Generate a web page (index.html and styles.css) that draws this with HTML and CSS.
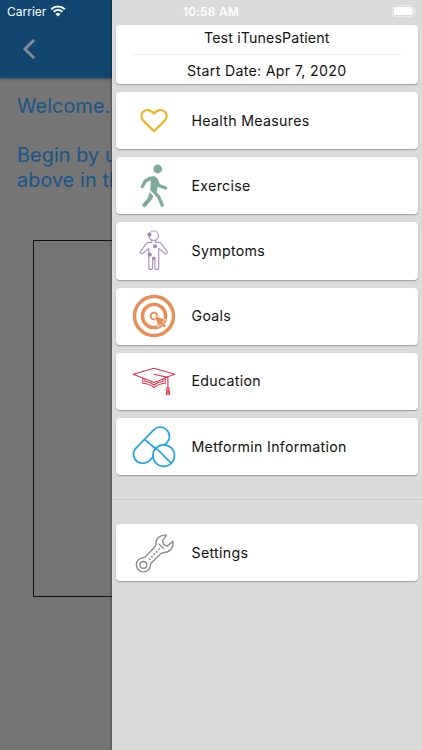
FILE: index.html
```
<!DOCTYPE html>
<html lang="en">
<head>
  <meta charset="UTF-8" />
  <title>Menu</title>
  <meta name="viewport" content="width=device-width, initial-scale=1.0" />
  <link rel="stylesheet" href="styles.css">
</head>
<body>

  <!-- Page behind the drawer -->
  <div class="page">
    <header class="topbar">
      <svg class="back" width="14" height="22" viewBox="0 0 14 22"><path d="M12 2 3 11l9 9"/></svg>
    </header>
    <main class="welcome">
      <p>Welcome.</p>
      <p>Begin by u<br>above in th</p>
      <div class="frame"></div>
    </main>
  </div>

  <!-- Side menu -->
  <nav class="drawer">
    <div class="card patient">
      <div class="name">Test iTunesPatient</div>
      <div class="date">Start Date: Apr 7, 2020</div>
    </div>

    <a class="card item">
      <svg class="icon heart" viewBox="0 0 44 44"><path d="M22 32.3 12.2 22.6C9.2 19.6 8.5 15.8 10.6 13.2 13.4 9.8 18.9 10.4 22 14.6 25.1 10.4 30.6 9.8 33.4 13.2 35.5 15.8 34.8 19.6 31.8 22.6Z"/></svg>
      <span>Health Measures</span>
    </a>

    <a class="card item">
      <svg class="icon walk" viewBox="0 0 44 44">
        <circle cx="25.7" cy="5" r="4.4"/>
        <path class="body" d="M16.5 13.5 22.5 12.6 25.8 15.5 24.8 25.5 24 29.5 18.8 26.5 19.2 17Z"/>
        <path class="limb" d="M18.5 14.3 13.3 17 10.3 22.6M24 16 26.8 21.6 33.6 24M21 26.5 26.7 32.8 30.2 41.2"/>
        <path class="body" d="M17.9 29.2 20.8 32 19.3 35.6 13.4 42.4C12 43.6 9.9 42 11 40.3L16.3 34.2Z"/>
      </svg>
      <span>Exercise</span>
    </a>

    <a class="card item">
      <svg class="icon symptoms" viewBox="0 0 44 44">
        <circle cx="21.7" cy="6.7" r="4.7"/>
        <path d="M19.8 11.3v2.1h-2.7c-1.2 0-2 .5-2.8 1.3L8.6 22.2c-1.3 1.7.8 3.4 2.4 2l5.8-4.7v19c0 2.7 3.8 2.7 3.8 0V28.4h2.3v10.1c0 2.7 3.8 2.7 3.8 0v-19l5.8 4.7c1.6 1.4 3.7-.3 2.4-2l-5.7-7.5c-.8-.8-1.6-1.3-2.8-1.3h-2.7v-2.1"/>
        <g class="dots"><circle cx="17.4" cy="5.7" r="2.1"/><circle cx="23" cy="17.3" r="2"/><circle cx="17.7" cy="25.7" r="2.1"/><circle cx="21.7" cy="29.7" r="1.4"/></g>
      </svg>
      <span>Symptoms</span>
    </a>

    <a class="card item">
      <svg class="icon goals" viewBox="0 0 44 44">
        <circle cx="22" cy="22" r="19.5"/>
        <circle cx="22" cy="22" r="11.6"/>
        <circle class="inner" cx="22" cy="22" r="3.4"/>
        <path d="M22.6 21.6 33.9 25.6 30.5 27.9 34.3 31.8 32.1 34 28.3 30.1 26.3 33Z"/>
      </svg>
      <span>Goals</span>
    </a>

    <a class="card item">
      <svg class="icon education" viewBox="0 0 44 44">
        <path d="M1.2 15.3 22 9.2 42.8 15.3 34 18.6M33 19.2 22 23.4 1.2 15.3M22 15.3 35.9 18.4v10.3M10.8 19.4v4.8C15.5 24.6 19.3 26.1 22 28.6 24.7 26.1 28.5 24.6 33.2 24.2V19.2M13 20.3v2.2C17 22.8 19.7 24 22 26 24.3 24 27 22.8 31 22.5V20.3"/>
        <circle cx="35.9" cy="29.9" r="1.3"/>
        <path d="M35 31.2 34.2 35.3h3.5l-.8-4.1M36 32v3"/>
      </svg>
      <span>Education</span>
    </a>

    <a class="card item">
      <svg class="icon pills" viewBox="0 0 44 44">
        <path d="M20.8 32C16.8 37.8 10.8 40 5.3 36.7 .8 33.3 .2 27.2 4 23.2L21.7 4.8C25.3 1.2 31 1.2 34.7 4.8 38.3 8.5 38.3 14 35 17.7L32.8 19.8M12.8 14.6 24 24"/>
        <circle cx="31.7" cy="30.6" r="10.8"/>
        <path d="M24 23 39.2 38.2"/>
      </svg>
      <span>Metformin Information</span>
    </a>

    <hr>

    <a class="card item">
      <svg class="icon settings" viewBox="0 0 44 44">
        <path d="M34.6 4.2C28.5 3.4 23.6 7.6 24 13.3 24 14.5 23.5 15.2 22.7 16L13.4 25.8C12.5 26.7 11.8 26.8 10.7 26.9 6.8 27.2 4.2 30.2 4.3 33.8 4.4 38 7.7 41 11.6 40.9 15.7 40.8 18.6 37.5 18.5 33.8 18.5 32.8 18.8 32.2 19.6 31.5L29.2 22.6C30.1 21.8 31 21.6 32.2 21.5 38 21 42 16.2 41 10.4L35.2 15.1 31.5 13.6 30.5 9.6Z"/>
        <circle cx="11.4" cy="33.9" r="3.4"/>
        <path class="dash" d="M17.6 28.2 27.4 18"/>
        <path d="M27.2 13.2 31.3 17.2"/>
      </svg>
      <span>Settings</span>
    </a>
  </nav>

  <!-- Status bar -->
  <div class="status">
    <div class="carrier">
      <span>Carrier</span>
      <svg width="16" height="12" viewBox="0 0 16 12"><path d="M1.2 4.2C5 .5 11 .5 14.8 4.2M3.7 6.7C6.2 4.4 9.8 4.4 12.3 6.7"/><path class="tip" d="M8 11.6 5.5 9C6.8 7.8 9.2 7.8 10.5 9Z"/></svg>
    </div>
    <div class="time">10:58 AM</div>
    <svg class="battery" width="25" height="12" viewBox="0 0 25 12"><rect class="shell" x=".5" y=".5" width="21.5" height="11" rx="3"/><rect x="2" y="2" width="18.5" height="8" rx="1.6"/><path class="shell" d="M23.5 4.3v3.4"/></svg>
  </div>

</body>
</html>
```
FILE: styles.css
```
* {
  box-sizing: border-box;
}

body {
  margin: 0;
  height: 750px;
  display: flex;
  position: relative;
  overflow: hidden;
  font-family: Inter, "Liberation Sans", sans-serif;
  background-color: #dbdbdb;
}

/* dimmed page */
.page {
  width: 112px;
  height: 750px;
  overflow: hidden;
  background-color: #757575;
}

.topbar {
  height: 78px;
  padding: 38px 0 0 22px;
  background-color: #10466f;
  box-shadow: 0 1px 3px rgba(0, 0, 0, 0.35);
}

.back {
  display: block;
  fill: none;
  stroke: #858b91;
  stroke-width: 3;
}

.welcome {
  width: 390px;
  padding: 16px 0 0 17px;
  color: #18568a;
  font-size: 19.8px;
  line-height: 24.5px;
  letter-spacing: 0.1px;
}

.welcome p {
  margin: 0 0 24.5px;
}

.frame {
  width: 356px;
  height: 357px;
  margin: 48px 0 0 16px;
  border: 1px solid #111;
}

/* side menu */
.drawer {
  width: 310px;
  height: 750px;
  padding: 25px 4px 0;
  position: relative;
  background-color: #dbdbdb;
  box-shadow: -1px 0 2px rgba(0, 0, 0, 0.35);
  color: #111;
  font-size: 14.2px;
  font-weight: 400;
  letter-spacing: 0.3px;
}

.card {
  display: flex;
  width: 301.5px;
  margin-bottom: 8px;
  border-radius: 4px;
  background-color: #fff;
  box-shadow: 0 1px 1.5px rgba(0, 0, 0, 0.3);
}

.patient {
  height: 59px;
  flex-direction: column;
  text-align: center;
  padding: 0 16px;
}

.name {
  flex: none;
  height: 30px;
  line-height: 25px;
  border-bottom: 1px solid #eee;
  letter-spacing: 0.15px;
}

.date {
  flex: none;
  line-height: 32px;
}

.item {
  height: 57.2px;
  align-items: center;
  padding-left: 16px;
}

.item span {
  padding-bottom: 1px;
}

.icon {
  width: 44px;
  height: 44px;
  margin-right: 15.5px;
  fill: none;
  stroke-linejoin: round;
  stroke-linecap: round;
}

.heart { stroke: #efb220; stroke-width: 2.2; }

.walk { fill: #7eab99; }
.walk .body { stroke: #7eab99; stroke-width: 1; }
.walk .limb { fill: none; stroke: #7eab99; stroke-width: 3.3; }

.symptoms { stroke: #b094c0; stroke-width: 1.2; }
.symptoms .dots { fill: #a688b8; stroke: none; }

.goals { stroke: #ec8b55; stroke-width: 3.4; }
.goals .inner { stroke-width: 1.9; }
.goals path { fill: #ec8b55; stroke: #fff; stroke-width: 0.8; stroke-linejoin: miter; }

.education { stroke: #e0344e; stroke-width: 1.1; }

.pills { stroke: #1ea7e8; stroke-width: 1.7; }

.settings { stroke: #8c8c8c; stroke-width: 1.4; }
.settings .dash { stroke-width: 1.8; stroke-dasharray: 0.2 3.2; }

hr {
  height: 1px;
  margin: 24px -4px;
  border: none;
  background-color: #cfcfcf;
}

/* status bar lies over both */
.status {
  position: absolute;
  top: 0;
  left: 0;
  width: 422px;
  height: 22px;
  padding: 0 5px 0 7px;
  display: grid;
  grid-template-columns: 1fr auto 1fr;
  align-items: center;
  color: #fff;
  font-size: 12px;
}

.carrier {
  display: flex;
  align-items: center;
  gap: 4px;
}

.carrier svg {
  fill: none;
  stroke: #fff;
  stroke-width: 2;
}

.carrier .tip {
  fill: #fff;
  stroke: none;
}

.time {
  padding-right: 2px;
  font-weight: 500;
  letter-spacing: 0.25px;
}

.battery {
  justify-self: end;
  margin-bottom: 1px;
  fill: #fff;
}

.battery .shell {
  fill: none;
  stroke: #ececec;
}
```
